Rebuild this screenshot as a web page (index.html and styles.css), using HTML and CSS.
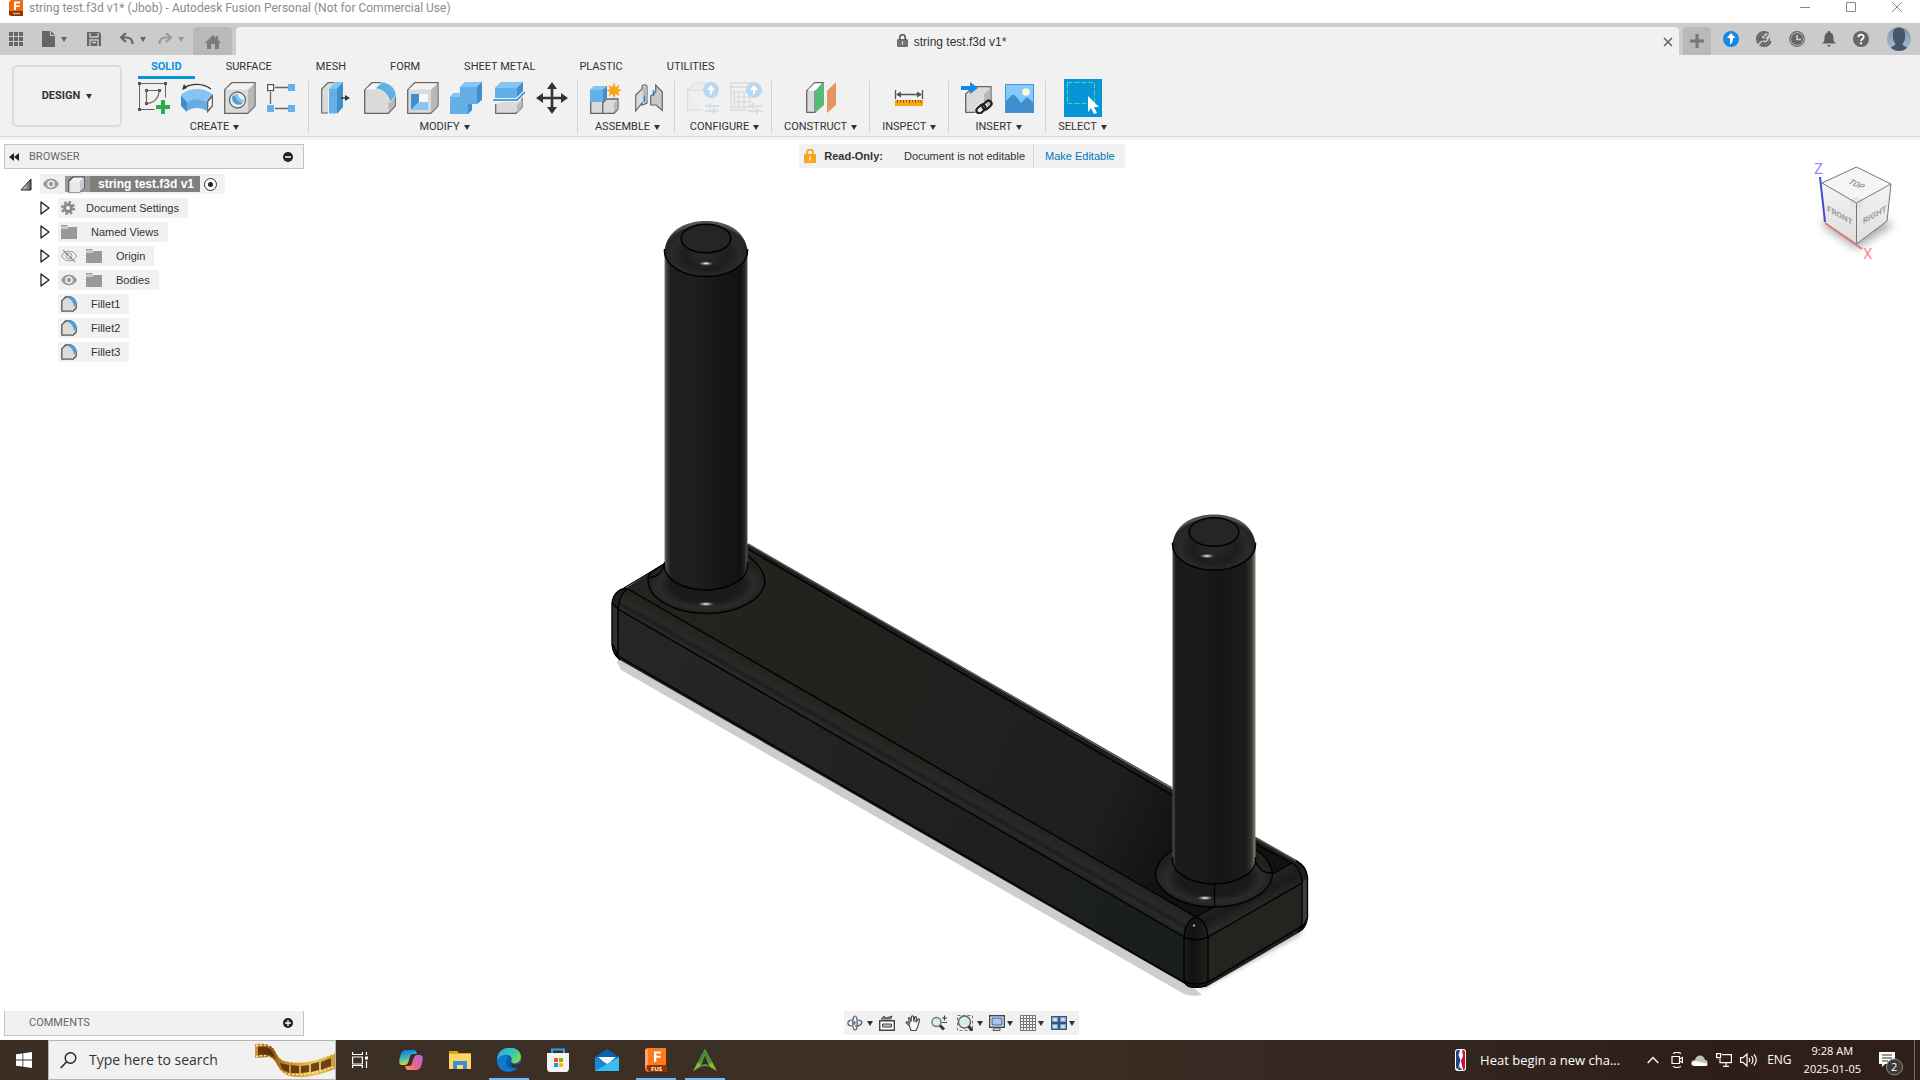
FILE: index.html
```html
<!DOCTYPE html>
<html lang="en">
<head>
<meta charset="utf-8">
<title>string test.f3d v1* (Jbob) - Autodesk Fusion Personal</title>
<link rel="stylesheet" href="styles.css">
</head>
<body>
<svg class="defs" width="0" height="0" aria-hidden="true">
  <symbol id="i-folder" viewBox="0 0 16 14"><path fill="#c9c9c9" d="M0 0h7v2h9v2H0z"/><path fill="#999" d="M0 4h7l1-2h8v12H0z"/><path fill="#999" d="M0 0h6v1H0z"/></symbol>
  <symbol id="i-eye" viewBox="0 0 16 12"><path fill="#999" d="M0 6C3-1 13-1 16 6 13 13 3 13 0 6z"/><circle cx="8" cy="6" r="3.8" fill="#f1f1f1"/><circle cx="8" cy="6" r="2.2" fill="#999"/></symbol>
  <symbol id="i-arrow" viewBox="0 0 10 14"><path d="M1 1L9 7 1 13z" fill="#f4f4f4" stroke="#222" stroke-width="1.3" stroke-linejoin="round"/></symbol>
  <symbol id="i-fillet-s" viewBox="0 0 16 16"><path d="M.8 15.2V5L4.500 1h5.500c3 1 5 4 5.200 7.500v3.500l-3 3.200z" fill="#dcdcdc" stroke="#555" stroke-width="1.300"/><path d="M7 2l2.500-1.500c3.500.5 6 4 6 8L12.800 10.500C12.500 6.500 10.500 3.500 7 2z" fill="#4ba3e3"/></symbol>
  <symbol id="i-cfg" viewBox="0 0 16 16"><circle cx="8" cy="8" r="8" fill="#b9d8ef"/><path d="M8 3l4 5h-2.500c0 2-.5 4-2.500 5V8H4z" fill="#fff"/></symbol>
  <symbol id="i-sliders" viewBox="0 0 14 11"><path d="M0 3h14M0 8h14M5 0v6M9 5v6" stroke="#d9dde0" stroke-width="2" fill="none"/></symbol>
</svg>

<header class="titlebar">
  <svg class="app-logo" width="14" height="16" viewBox="0 0 14 16"><path d="M2 0h12v15H2L0 14V2z" fill="#f26a10"/><path d="M0 11h14v5H2l-2-1z" fill="#8f3600"/><path d="M5 1.500h6v2H7v1.800h3.500v1.800H7V10H5z" fill="#fff"/><path d="M4 13.500h7" stroke="#d8b9a4" stroke-width="1.300"/></svg>
  <h1>string test.f3d v1* (Jbob) - Autodesk Fusion Personal (Not for Commercial Use)</h1>
  <div class="win-controls">
    <button aria-label="Minimize"><svg width="12" height="12"><path d="M1 7.500h10" stroke="#888"/></svg></button>
    <button aria-label="Maximize"><svg width="12" height="12"><path d="M1.500 2.500h9v9h-9z" fill="none" stroke="#888"/></svg></button>
    <button aria-label="Close"><svg width="12" height="12"><path d="M1 2l10 10M11 2L1 12" stroke="#888"/></svg></button>
  </div>
</header>

<div class="tabbar">
  <div class="quick">
    <button aria-label="Data panel"><svg width="14" height="14" fill="#666"><path d="M0 0h4v4H0zM5 0h4v4H5zM10 0h4v4h-4zM0 5h4v4H0zM5 5h4v4H5zM10 5h4v4h-4zM0 10h4v4H0zM5 10h4v4H5zM10 10h4v4h-4z"/></svg></button>
    <button class="q-file" aria-label="File"><svg width="13" height="16" fill="#666"><path d="M0 0h8v5h5v11H0zM9 0l4 4H9z"/></svg><span class="caret"></span></button>
    <button class="q-save" aria-label="Save"><svg width="14" height="14"><path d="M0 0h12l2 2v12H0z" fill="#666"/><path d="M3 1v4h8V1M3 14V8h8v6M5 10.500h4" stroke="#cbcbcb" stroke-width="1.300" fill="none"/></svg></button>
    <button class="q-undo" aria-label="Undo"><svg width="14" height="12"><path d="M6 0L1 4.500 6 9M1 4.500h5c4 0 6.500 2 6.500 6.500" stroke="#666" stroke-width="2.200" fill="none"/></svg><span class="caret"></span></button>
    <button class="q-redo" aria-label="Redo"><svg width="14" height="12"><path d="M8 0l5 4.500L8 9M13 4.500H8C4 4.500 1.500 6.500 1.500 11" stroke="#999" stroke-width="2.200" fill="none"/></svg><span class="caret"></span></button>
  </div>
  <button class="home-tab" aria-label="Home"><svg width="16" height="14"><path d="M8 0l3 3V1h2v4l3 3h-2v6h-4V9H6v5H2V8H0z" fill="#7b7b7b"/></svg></button>
  <div class="doc-tab">
    <span class="doc-name"><svg width="11" height="13"><path d="M2.800 6V3.500a2.700 2.700 0 0 1 5.400 0V6" fill="none" stroke="#555" stroke-width="1.500"/><path d="M.7 5.700h9.600v6.600H.7z" fill="#777" stroke="#555"/><path d="M5.500 7.500v3" stroke="#eee"/></svg>string test.f3d v1*</span>
    <button aria-label="Close tab"><svg width="10" height="10"><path d="M1 1l8 8M9 1L1 9" stroke="#666" stroke-width="1.600"/></svg></button>
  </div>
  <button class="new-tab" aria-label="New tab"><svg width="14" height="14"><path d="M7 0v14M0 7h14" stroke="#777" stroke-width="3"/></svg></button>
  <div class="status">
    <button aria-label="Update"><svg width="16" height="16"><circle cx="8" cy="8" r="8" fill="#1688e0"/><path d="M8 2l4.500 5H10c0 3-.5 5-3 6.500V7H4z" fill="#fff"/></svg></button>
    <button aria-label="Extensions"><svg width="16" height="16"><circle cx="8" cy="8" r="7" fill="none" stroke="#666" stroke-width="2" stroke-dasharray="36 8" stroke-dashoffset="-2"/><circle cx="8" cy="8" r="6" fill="#666"/><path d="M2 14l4-4M6 5l2.500 2.500M7 9.500C9 12 12 10 12 7l2-1M8 5l3-2.500M10 7.500L13.500 4" stroke="#cbcbcb" stroke-width="1.700" fill="none"/></svg></button>
    <button aria-label="Job status"><svg width="16" height="16"><circle cx="8" cy="8" r="7.300" fill="none" stroke="#666" stroke-width="1.200"/><circle cx="8" cy="8" r="6" fill="#666"/><path d="M8 4v4.500h4" stroke="#d5d5d5" stroke-width="1.500" fill="none"/></svg></button>
    <button aria-label="Notifications"><svg width="14" height="16"><path d="M7 0c1 0 1.300.6 1.300 1.500C11 2.300 11.500 5 11.500 7.500s.8 3.500 2.500 5H0C1.700 11 2.500 10 2.500 7.500S3 2.300 5.700 1.500C5.700.6 6 0 7 0zM5 14h4l-2 2z" fill="#5e5e5e"/></svg></button>
    <button aria-label="Help"><svg width="16" height="16"><circle cx="8" cy="8" r="8" fill="#666"/><path d="M5.300 6.300c0-3.500 5.400-3.500 5.400-.3 0 2-2.700 2-2.700 4" stroke="#fff" stroke-width="1.700" fill="none"/><path d="M7 11.300h2v2H7z" fill="#fff"/></svg></button>
    <button class="avatar" aria-label="Account"><svg width="24" height="24"><defs><clipPath id="av"><circle cx="12" cy="12" r="12"/></clipPath><linearGradient id="avg" x2="0" y2="1"><stop stop-color="#8097b4"/><stop offset="1" stop-color="#a9b9d2"/></linearGradient></defs><g clip-path="url(#av)"><path fill="url(#avg)" d="M0 0h24v24H0z"/><path d="M6 6c0-7 12-7 12 0v5c0 3-2 4-2.500 6 1 2.500 4 2 5.500 5v2H3v-2c1.500-3 4.500-2.500 5.500-5C8 15 6 14 6 11z" fill="#48566a"/></g></svg></button>
  </div>
</div>

<section class="ribbon">
  <button class="workspace">DESIGN <span class="caret"></span></button>
  <div class="ribbon-main">
    <nav class="tabs">
      <a href="#" class="active">SOLID</a><a href="#">SURFACE</a><a href="#">MESH</a><a href="#">FORM</a><a href="#">SHEET METAL</a><a href="#">PLASTIC</a><a href="#">UTILITIES</a>
    </nav>
    <div class="groups">
      <div class="group first">
        <div class="tools">
          <button aria-label="Create sketch"><svg width="32" height="32"><path d="M1.500 1.500h26v14M1.500 1.500v26h15" stroke="#666" fill="none"/><path d="M0 0h3v3H0zM26 0h3v3h-3zM0 26h3v3H0zM7 7h3v3H7zM20 7h3v3h-3zM7 20h3v3H7z" fill="#555"/><path d="M8.500 21V8.500H21C21 16 16 21 9 21.500" stroke="#666" fill="none" stroke-width="1.200"/><path d="M23 18h4v5h5v4h-5v5h-4v-5h-5v-4h5z" fill="#28b04c"/></svg></button>
          <button aria-label="Revolve"><svg width="32" height="32"><path d="M3 6c7-5 19-5 27 1" stroke="#333" stroke-width="1.300" fill="none"/><path d="M1 8l2-6 3 4z" fill="#333"/><path d="M0 13C8 5 24 5 32 13l-6 7c-6-4-14-4-20 0z" fill="#85c5f3"/><path d="M0 13l6 7v10l-6-6z" fill="#3f8fce"/><path d="M6 20c6-4 14-4 20 0v9c-6-4-14-4-20 0z" fill="#64aee4"/><path d="M26.700 19.500L31.300 14v10l-4.600 5.500z" fill="#fff" stroke="#555" stroke-width="1.200"/></svg></button>
          <button aria-label="Hole"><svg width="32" height="32"><path d="M.7 8l7-7.300H31V24l-7.300 7.300H.7z" fill="#dadada" stroke="#666" stroke-width="1.300"/><path d="M1.500 7.500l6.500-6h22L24 7.500z" fill="#f2f2f2"/><path d="M24 8l6.400-6v22L24 30.500z" fill="#b8b8b8"/><circle cx="13.500" cy="18" r="8" fill="#eee" stroke="#666" stroke-width="1.300"/><path d="M8.500 13.500c-2 6 3 11 9.500 8.500 1-3-5-10-9.500-8.500z" fill="#4ba0dc"/><path d="M11 12c0 5 3 8.500 8 8.500l1-3c-4 0-6-2-6-5.500z" fill="#85c5f3"/></svg></button>
          <button aria-label="Pattern"><svg width="32" height="32"><path d="M8 5.500h13M3.500 10v12M8 26.500h13" stroke="#666" stroke-width="1.300"/><path d="M.6 2.600h6v6h-6z" fill="#fff" stroke="#555" stroke-width="1.200"/><path d="M21 2h7v7h-7zM0 23h7v7H0zM21 23h7v7h-7z" fill="#67b0e8"/></svg></button>
        </div>
        <button class="caption">CREATE <span class="caret"></span></button>
      </div>
      <div class="group">
        <div class="tools">
          <button aria-label="Press pull"><svg width="32" height="32"><path d="M.7 7L7 .7h9L9 7v24H.7z" fill="#dadada" stroke="#666" stroke-width="1.200"/><path d="M7.500 7.500L14 0h8v24l-7 8H7.500z" fill="#65afe7" stroke="#f1f1f1"/><path d="M8 7l6-7h8l-6 7z" fill="#85c5f3"/><path d="M16 7l6-7v25l-6 7z" fill="#3f8fce"/><path d="M20 16h6" stroke="#333" stroke-width="1.400"/><path d="M24 13l5 3-5 3z" fill="#333"/></svg></button>
          <button aria-label="Fillet"><svg width="32" height="32"><path d="M.7 31.300V8L8 .7h10c8 2 13 7 13.300 14V24l-7 7.300z" fill="#dadada" stroke="#666" stroke-width="1.300"/><path d="M1.500 7.500l7-6h8L11 7.500z" fill="#f8f8f8"/><path d="M24.500 21l6-5v8l-6 6.500z" fill="#b8b8b8"/><path d="M11 6.500L18 0c8 1 14 6 14 14l-6.500 6.500C25 13 19 7.500 11 6.500z" fill="#65afe7" stroke="#f1f1f1" stroke-width=".8"/></svg></button>
          <button aria-label="Shell"><svg width="32" height="32"><path d="M.7 8l7-7.300H31V24l-7.300 7.300H.7z" fill="#dadada" stroke="#666" stroke-width="1.300"/><path d="M1.500 7.500l6.500-6h22L24 7.500z" fill="#f2f2f2"/><path d="M24 8l6.400-6v22L24 30.500z" fill="#b8b8b8"/><path d="M4 12h17v16H4z" fill="#f7f7f7"/><path d="M4 12h8v8l-8 8z" fill="#3f8fce"/><path d="M4 28l8-8h9v8z" fill="#85c5f3"/></svg></button>
          <button aria-label="Combine"><svg width="32" height="32"><path d="M10 5l5-5h17v18l-5 4h-5v6l-4 4H0V15l4-4h6z" fill="#65afe7"/><path d="M10 5l5-5h17l-5 5zM0 15l4-4h6v4z" fill="#85c5f3"/><path d="M27 5l5-5v17l-5 5zM18 22h4v6l-4 4z" fill="#3f8fce"/></svg></button>
          <button aria-label="Split body"><svg width="32" height="32"><path d="M2.700 22v9.300H23l6-6V15" fill="#dadada" stroke="#666" stroke-width="1.300"/><path d="M24 23l5-5v7l-5 6z" fill="#b8b8b8"/><path d="M2 6l6-6h22v10l-6 6H2z" fill="#65afe7"/><path d="M2 6l6-6h22l-6 6z" fill="#85c5f3"/><path d="M24 6l6-6v10l-6 6z" fill="#3f8fce"/><path d="M0 18h24l8-8" stroke="#f1f1f1" stroke-width="4" fill="none"/><path d="M0 18h24l8-8" stroke="#1688e0" stroke-width="1.500" fill="none"/></svg></button>
          <button aria-label="Move"><svg width="32" height="32"><path d="M16 4v24M4 16h24" stroke="#333" stroke-width="2.600"/><path d="M16 0l5 7H11zM16 32l-5-7h10zM0 16l7-5v10zM32 16l-7 5V11z" fill="#333"/></svg></button>
        </div>
        <button class="caption">MODIFY <span class="caret"></span></button>
      </div>
      <div class="group">
        <div class="tools">
          <button aria-label="New component"><svg width="32" height="32"><path d="M.7 19h12v12.300H.7zM12.700 21l4-4H28v10l-4 4.300H12.700z" fill="#dadada" stroke="#666" stroke-width="1.300"/><path d="M24 21l3.500-3v9L24 30.500z" fill="#b8b8b8"/><path d="M0 8l4-4h13v12l-4 4H0z" fill="#65afe7"/><path d="M0 8l4-4h13l-4 4z" fill="#85c5f3"/><path d="M13 8l4-4v12l-4 4z" fill="#3f8fce"/><path d="M24 0l1.500 5 4-2.500-1.500 4.500 4 1-4 2 1.500 4-4-2L24 17l-1.500-5-4 2.500 1.500-4.500-4-1.500 4-1.500-1.500-4 4 2z" fill="#f9a51a"/></svg></button>
          <button aria-label="Joint"><svg width="32" height="32"><path d="M2.700 13L9 7V5c0-3 5-3 5 0v16l-5 2v-2l-6.300 8z" fill="#dadada" stroke="#666" stroke-width="1.200"/><path d="M10 5v15l4-1V5z" fill="#b8b8b8"/><path d="M17.700 14l5-4V3l6.600 7v18.500L23 23h-5.300z" fill="#c8c8c8" stroke="#666" stroke-width="1.200"/><path d="M11.500 14v6M20.500 8v6" stroke="#1688e0" stroke-width="1.400"/></svg></button>
        </div>
        <button class="caption">ASSEMBLE <span class="caret"></span></button>
      </div>
      <div class="group">
        <div class="tools">
          <button aria-label="Configure model" disabled><svg width="32" height="32"><path d="M.7 8l7-7H27v16M.7 8v20H16M1 8h18" fill="#eee" stroke="#dcdcdc" stroke-width="1.200"/><use href="#i-cfg" x="16" y="0" width="16" height="16"/><use href="#i-sliders" x="18" y="21" width="14" height="11"/></svg></button>
          <button aria-label="Configuration table" disabled><svg width="32" height="32"><path d="M1 1h22v4H1zM1 5v23h15M4 10h16v15H4zM4 15h16M4 20h16M9 10v15M14 10v15" fill="none" stroke="#dcdcdc" stroke-width="1.500"/><use href="#i-cfg" x="16" y="0" width="16" height="16"/><use href="#i-sliders" x="18" y="21" width="14" height="11"/></svg></button>
        </div>
        <button class="caption">CONFIGURE <span class="caret"></span></button>
      </div>
      <div class="group wide">
        <div class="tools">
          <button aria-label="Offset plane"><svg width="32" height="32"><path d="M1.700 9l8-8.300H18L10 9v21.300H1.700z" fill="#dadada" stroke="#666" stroke-width="1.300"/><path d="M2.500 8.500l7-7H17l-6 7z" fill="#fff"/><path d="M10 9l9-9v23l-9 8z" fill="#52bd76"/><path d="M22 9l9-9v23l-9 8z" fill="#e5955f"/></svg></button>
        </div>
        <button class="caption">CONSTRUCT <span class="caret"></span></button>
      </div>
      <div class="group wide">
        <div class="tools">
          <button aria-label="Measure"><svg width="32" height="32"><path d="M2.500 8v9M29.500 8v9M4 12.500h24" stroke="#555" stroke-width="1.300"/><path d="M3 12.500l5-3v6zM29 12.500l-5-3v6z" fill="#555"/><path d="M2 18h28v6H2z" fill="#f9a51a"/><path d="M4.500 18v3M7.500 18v2M10.500 18v3M13.500 18v2M16.500 18v3M19.500 18v2M22.500 18v3M25.500 18v2M28 18v3" stroke="#8b5c08"/></svg></button>
        </div>
        <button class="caption">INSPECT <span class="caret"></span></button>
      </div>
      <div class="group">
        <div class="tools">
          <button aria-label="Insert derive"><svg width="32" height="32"><path d="M4.700 12L13 4.700h17V23l-7 7.300H4.700z" fill="#dadada" stroke="#666" stroke-width="1.300"/><path d="M23 12l6.500-6v17L23 29z" fill="#b8b8b8"/><path d="M0 4h9V0l8 6-8 6V8H0z" fill="#1688e0"/><g fill="none" stroke="#f1f1f1" stroke-width="5"><rect x="16" y="24" width="9" height="6" rx="3" transform="rotate(-40 20 27)"/></g><g fill="none" stroke="#222" stroke-width="2.200"><rect x="15" y="24" width="10" height="6" rx="3" transform="rotate(-40 20 27)"/><rect x="21" y="20" width="10" height="6" rx="3" transform="rotate(-40 26 23)"/></g></svg></button>
          <button aria-label="Insert image"><svg width="32" height="32"><path d="M1 2h29v29H1z" fill="#85c9fb"/><path d="M1 20l7-7c2-1 4 1 6 4l3 4 5-5c2-1 4 1 8 6v9H1z" fill="#3f8fce"/><circle cx="22" cy="10" r="3.800" fill="#fffbd6"/><path d="M1.500 2.500h28v28h-28z" fill="none" stroke="#4695cf"/></svg></button>
        </div>
        <button class="caption">INSERT <span class="caret"></span></button>
      </div>
      <div class="group last">
        <div class="tools">
          <button class="selected" aria-label="Select"><svg width="38" height="38"><path d="M3.500 3.500h27v21h-27z" fill="none" stroke="#54d88c" stroke-dasharray="5 2"/><path d="M24 17l11 11h-5l3 6-3 1-3-6-3 4z" fill="#fff"/></svg></button>
        </div>
        <button class="caption">SELECT <span class="caret"></span></button>
      </div>
    </div>
  </div>
</section>

<main class="viewport">
  <svg class="model" viewBox="0 140 1920 900" role="img" aria-label="Base plate with two posts">
    <defs>
      <linearGradient id="post1"><stop stop-color="#7b776e"/><stop offset=".03" stop-color="#3c3c3a"/><stop offset=".08" stop-color="#1d1d1d"/><stop offset=".35" stop-color="#1f1f1f"/><stop offset=".7" stop-color="#161616"/><stop offset=".92" stop-color="#121212"/><stop offset=".97" stop-color="#282826"/><stop offset="1" stop-color="#5b5852"/></linearGradient>
      <linearGradient id="post2"><stop stop-color="#55524d"/><stop offset=".04" stop-color="#191b1b"/><stop offset=".3" stop-color="#1a1c1c"/><stop offset=".6" stop-color="#151515"/><stop offset=".88" stop-color="#1b1b1a"/><stop offset=".95" stop-color="#35342f"/><stop offset="1" stop-color="#8a867c"/></linearGradient>
      <linearGradient id="topf" gradientUnits="userSpaceOnUse" x1="640" y1="590" x2="1180" y2="840"><stop stop-color="#232320"/><stop offset=".85" stop-color="#1f1f1d"/><stop offset="1" stop-color="#121211"/></linearGradient>
      <linearGradient id="frontf" gradientUnits="userSpaceOnUse" x1="612" y1="620" x2="1184" y2="960"><stop stop-color="#262626"/><stop offset="1" stop-color="#1a1d1d"/></linearGradient>
      <linearGradient id="round" gradientUnits="userSpaceOnUse" x1="900" y1="747" x2="888" y2="768"><stop stop-color="#232320"/><stop offset=".45" stop-color="#292927"/><stop offset=".6" stop-color="#1d1d1d"/><stop offset=".75" stop-color="#2a2a2a"/><stop offset="1" stop-color="#1e1f1f"/></linearGradient>
      <linearGradient id="round2" gradientUnits="userSpaceOnUse" x1="1244" y1="890" x2="1254" y2="910"><stop stop-color="#232320"/><stop offset=".5" stop-color="#1b1b1a"/><stop offset="1" stop-color="#292927"/></linearGradient>
      <linearGradient id="corner"><stop stop-color="#1b1c1c"/><stop offset=".4" stop-color="#111"/><stop offset="1" stop-color="#20201f"/></linearGradient>
      <radialGradient id="cap" cx=".5" cy=".6" r=".55"><stop stop-color="#2a2a29"/><stop offset=".5" stop-color="#1d1d1d"/><stop offset=".75" stop-color="#292a29"/><stop offset=".93" stop-color="#252524"/><stop offset="1" stop-color="#55534e"/></radialGradient>
      <radialGradient id="flare"><stop offset=".6" stop-color="#1a1a1a"/><stop offset=".82" stop-color="#2b2b2a"/><stop offset="1" stop-color="#20201e"/></radialGradient>
      <radialGradient id="spark"><stop stop-color="#fff"/><stop offset=".3" stop-color="#aaa"/><stop offset="1" stop-color="#444" stop-opacity="0"/></radialGradient>
      <filter id="soft" x="-10%" y="-10%" width="120%" height="120%"><feGaussianBlur stdDeviation="2"/></filter>
    </defs>
    <path d="M617 662L621 670 1184 994q8 3 18 1L1190 984 622 654z" fill="#cdcdcd"/>
    <path d="M1200 990L1300 935l3-5-100 52z" fill="#aaa" filter="url(#soft)"/>
    <path d="M612 603q2-13 14-15L664 564 748 544 1172 789 1298 861q9 5 10 17v40q-1 10-8 14L1206 987h-16L620 660q-7-6-8-15z" fill="#1f1f1d"/>
    <path d="M628 588L664 565 748 548 1292 863 1196 917z" fill="url(#topf)"/>
    <path d="M628 588L1196 917l-12 20L618 609q1-12 10-21z" fill="url(#round)"/>
    <path d="M612 603l6 6v49q-6-4-6-13z" fill="#30302e"/>
    <path d="M618 609L1184 937v45L618 656z" fill="url(#frontf)"/>
    <path d="M1196 917l96-54q9 6 10 20l-94 54z" fill="url(#round2)"/>
    <path d="M1208 937l94-54v42l-94 57z" fill="#232320"/>
    <path d="M1302 883l6-6v41l-6 8z" fill="#3d3c39"/>
    <path d="M1184 937q2-16 12-20 10 4 12 20v45q-2 6-12 6t-12-6z" fill="url(#corner)"/>
    <path d="M748 544L1172 788M1256 838l42 24" stroke="#55544f" stroke-width="1.500" fill="none"/>
    <g fill="none" stroke="#000" stroke-width="1.400">
      <path d="M628 589L1196 917l96-54M612 603l6 6L1184 937q12 6 24 0l94-54M613 645l5 11L1184 982q12 4 24 0l94-56M1184 982v-45q1-16 12-20 11 4 12 20v45M618 658v-49q1-14 10-21M612 603v42q1 9 8 15M624 588l40-24M748 549L1172 795M1256 844l36 19M1292 863q9 5 10 20v43l-4 6M1296 861q10 5 11.500 16v41l-6 12M612 603q2-13 14-15M1184 980q2 7 8 7h8q6 0 8-7"/>
    </g>
    <path d="M664 564L650 573q-2 3-2 7a58.500 33.500 0 0 0 117 0q-2-13-17-24z" fill="url(#flare)" stroke="#000" stroke-width="1.400"/>
    <path d="M664 565q-2 11-15 13" fill="none" stroke="#000" stroke-width="1.300"/>
    <path d="M1155.500 873a58.500 34 0 0 0 117 0q-2-13-16-23h-84q-15 10-17 23z" fill="url(#flare)" stroke="#000" stroke-width="1.400"/>
    <path d="M1256 862q4 11 16 11M1214.500 883v24" fill="none" stroke="#000" stroke-width="1.300"/>
    <path d="M664.500 250v316a41.500 24 0 0 0 83 0V250z" fill="url(#post1)"/>
    <path d="M1172.500 545v315a41.500 24 0 0 0 83 0V545z" fill="url(#post2)"/>
    <path d="M664.500 562v4a41.500 24 0 0 0 83 0v-4M1172.500 857v3a41.500 24 0 0 0 83 0v-3" fill="none" stroke="#000" stroke-width="1.400"/>
    <g id="post-cap">
      <path d="M664.500 251c2-20 20-30 41.500-30s39.500 10 41.500 30a41.500 25.500 0 0 1-83 0z" fill="url(#cap)"/>
      <path d="M664.500 249v2a41.500 25.500 0 0 0 83 0v-2" fill="none" stroke="#000" stroke-width="1.500"/>
      <ellipse cx="706" cy="238.500" rx="24.800" ry="14.300" fill="#252523" stroke="#000" stroke-width="1.500"/>
    </g>
    <use href="#post-cap" x="508" y="293.500"/>
    <g fill="url(#spark)"><ellipse cx="706" cy="263.500" rx="8" ry="2.500"/><ellipse cx="1207" cy="556" rx="8" ry="2.500"/><ellipse cx="706" cy="604" rx="9" ry="2.500"/><ellipse cx="1205" cy="898" rx="9" ry="2.500"/><circle cx="1194" cy="925.500" r="2"/></g>
  </svg>

  <aside class="browser">
    <div class="panel-head"><svg width="11" height="8"><path d="M5 0v8L0 4zM10 0v8L5 4z" fill="#222"/></svg><h2>BROWSER</h2><button aria-label="Collapse browser"><svg width="10" height="10"><circle cx="5" cy="5" r="5" fill="#222"/><path d="M2 5h6" stroke="#fff" stroke-width="1.500"/></svg></button></div>
    <ul class="tree">
      <li class="root"><svg class="twist" width="12" height="13"><defs><linearGradient id="tw"><stop stop-color="#eee"/><stop offset="1" stop-color="#555"/></linearGradient></defs><path d="M1 12L11 1v11z" fill="url(#tw)" stroke="#222"/></svg><div class="node"><svg width="16" height="12"><use href="#i-eye"/></svg><span class="comp"><svg width="17" height="17"><path d="M1 5l4-4h11v11l-4 4H1z" fill="#f4f4f4" stroke="#444" stroke-width="1.200"/><path d="M12 5l4-3.500V12l-4 4z" fill="#c4ccd8"/><path d="M1.500 5.500H12V16H1.500z" fill="#e6e8ec"/></svg></span><span class="root-name">string test.f3d v1</span><label class="act"><input type="radio" name="active" checked aria-label="Activate component"></label></div></li>
      <li><svg class="twist" width="10" height="14"><use href="#i-arrow"/></svg><div class="node gear"><svg width="14" height="14"><circle cx="7" cy="7" r="3.500" fill="none" stroke="#888" stroke-width="3"/><circle cx="7" cy="7" r="5.900" fill="none" stroke="#888" stroke-width="2.200" stroke-dasharray="2.600 2"/></svg>Document Settings</div></li>
      <li><svg class="twist" width="10" height="14"><use href="#i-arrow"/></svg><div class="node"><svg width="16" height="14"><use href="#i-folder"/></svg>Named Views</div></li>
      <li><svg class="twist" width="10" height="14"><use href="#i-arrow"/></svg><div class="node pair"><svg width="16" height="12"><path d="M.5 6c3-6.500 12-6.500 15 0-3 6.500-12 6.500-15 0z" fill="none" stroke="#999"/><circle cx="8" cy="6" r="3" fill="none" stroke="#999"/><path d="M2 0l12 12" stroke="#888" stroke-width="1.200"/></svg><svg width="16" height="14"><use href="#i-folder"/></svg>Origin</div></li>
      <li><svg class="twist" width="10" height="14"><use href="#i-arrow"/></svg><div class="node pair"><svg width="16" height="12"><use href="#i-eye"/></svg><svg width="16" height="14"><use href="#i-folder"/></svg>Bodies</div></li>
      <li class="leaf"><div class="node"><svg width="16" height="16"><use href="#i-fillet-s"/></svg>Fillet1</div></li>
      <li class="leaf"><div class="node"><svg width="16" height="16"><use href="#i-fillet-s"/></svg>Fillet2</div></li>
      <li class="leaf"><div class="node"><svg width="16" height="16"><use href="#i-fillet-s"/></svg>Fillet3</div></li>
    </ul>
  </aside>

  <div class="readonly">
    <svg width="12" height="14"><path d="M3 6V3.500a3 3 0 0 1 6 0V6" fill="none" stroke="#f9a51a" stroke-width="1.800"/><path d="M0 5h12v9H0z" fill="#f9a51a"/><path d="M6 7.500v4" stroke="#fff3d0" stroke-width="1.500"/></svg>
    <strong>Read-Only:</strong><span class="msg">Document is not editable</span><a href="#">Make Editable</a>
  </div>

  <svg class="viewcube" width="110" height="112" viewBox="1810 155 110 112">
    <defs><linearGradient id="cf" x2="0" y2="1"><stop stop-color="#f4f4f4"/><stop offset="1" stop-color="#dedede"/></linearGradient><filter id="cs" x="-30%" y="-60%" width="160%" height="220%"><feGaussianBlur stdDeviation="4"/></filter></defs>
    <path d="M1820 224l36 25 38-24-36-16z" fill="#777" opacity=".6" filter="url(#cs)"/>
    <path d="M1822 183l34.500 20v41L1825 223zM1891 184l-34.500 19v41L1887 221z" fill="url(#cf)"/>
    <path d="M1822 183l34.500-16 34.500 17-34.500 19z" fill="#f5f5f5"/>
    <path d="M1850 199.500l6.500-3 6.500 3v7l-6.500 3.500-6.500-3.500z" fill="#dde1e6" opacity=".7"/>
    <path d="M1822 183l34.500-16 34.500 17-34.500 19zM1856.500 203v41M1891 184l-4 37-30.500 23L1825 223" fill="none" stroke="#777"/>
    <path d="M1820 177l5 45" stroke="#4646d8" stroke-width="2"/>
    <path d="M1825 223l37 26" stroke="#e07a7a" stroke-width="2"/>
    <g class="face"><text transform="translate(1827 211) skewY(29)">FRONT</text><text transform="translate(1863 224) skewY(-29)">RIGHT</text><text transform="translate(1847 183) rotate(24) skewX(-28)">TOP</text></g>
    <text class="axis-z" x="1814" y="174">Z</text><text class="axis-x" x="1863" y="259">X</text>
  </svg>

  <aside class="panel-head comments"><h2>COMMENTS</h2><button aria-label="Expand comments"><svg width="10" height="10"><circle cx="5" cy="5" r="5" fill="#222"/><path d="M2 5h6M5 2v6" stroke="#fff" stroke-width="1.300"/></svg></button></aside>

  <div class="navbar">
    <button aria-label="Orbit"><svg width="16" height="16"><path d="M8 1c3 0 3 14 0 14S5 1 8 1zM5 5C-.5 5-.5 11 5 11M11 5c5.500 0 5.500 6-3 6" fill="none" stroke="#555" stroke-width="1.200"/><path d="M7.500 6v4M5.500 8h4" stroke="#2a7fd0" stroke-width="1.200" fill="none"/></svg><span class="caret"></span></button>
    <button aria-label="Look at"><svg width="16" height="16"><path d="M.7 5.700h14.600v9.600H.7z" fill="#fff" stroke="#444" stroke-width="1.400"/><path d="M3.500 9h9v3h-9z" fill="#bbb" stroke="#444"/><path d="M2 4l3-3 2 2 6-2-1 3z" fill="#888" stroke="#555"/></svg></button>
    <button aria-label="Pan"><svg width="16" height="16"><path d="M4.500 11L1 7.500c1-1.500 2.500 0 3.500 1L3.500 3c1-1.500 1.500 0 2.500 4L6.500 1.500c1-1.500 2 0 2 0L8.800 7l1-5c1-1 1.800 0 1.500 1L11 7.500l2-3.500c1-.5 1.800 0 1.500 1L13 11l-2 4.500H6z" fill="#fff" stroke="#444" stroke-width="1.100"/></svg></button>
    <button aria-label="Zoom"><svg width="16" height="16"><circle cx="5.500" cy="7" r="4.500" fill="#d9edf2" stroke="#777" stroke-width="1.400"/><path d="M9 10.500l4 4" stroke="#333" stroke-width="2.800"/><path d="M11 3h5M13.500.5v5M11 7.500h5" stroke="#444" stroke-width="1.200"/></svg></button>
    <button class="fit" aria-label="Fit"><svg width="16" height="16"><path d="M.5.500h15v15H.5z" fill="none" stroke="#777" stroke-dasharray="3 2"/><circle cx="7.500" cy="7" r="6" fill="#d9ede8" stroke="#666" stroke-width="1.400"/><path d="M11.500 11.500l4 4" stroke="#333" stroke-width="3"/></svg><span class="caret"></span></button>
    <button class="tight" aria-label="Display settings"><svg width="16" height="16"><path d="M.7.700h14.600v11.600H.7z" fill="#fff" stroke="#445" stroke-width="1.400"/><path d="M3 3h10v7H3z" fill="#a5c8ee" stroke="#2b5fa5"/><path d="M5 13h6v2.500H4z" fill="#ddd" stroke="#555"/></svg><span class="caret"></span></button>
    <button class="tight" aria-label="Grid and snaps"><svg width="16" height="16"><path d="M.5.500h15v15H.5zM3.500 0v16M6.500 0v16M9.500 0v16M12.500 0v16M0 3.500h16M0 6.500h16M0 9.500h16M0 12.500h16" fill="none" stroke="#777"/></svg><span class="caret"></span></button>
    <button class="tight" aria-label="Viewports"><svg width="16" height="14"><g fill="#9dc0e6" stroke="#345579" stroke-width="1.200"><path d="M.6.600h6.800v5.800H.6zM8.600.600h6.800v5.800H8.600zM.6 7.600h6.800v5.800H.6zM8.600 7.600h6.800v5.800H8.600z"/></g><path d="M2.500 3.500h3M10.500 3.500h3M2.500 10.500h3M10.500 10.500h3" stroke="#dcebfa" stroke-width="2"/></svg><span class="caret"></span></button>
  </div>
</main>

<footer class="taskbar">
  <button class="start" aria-label="Start"><svg width="16" height="16" fill="#fff"><path d="M0 2.300l6.500-.9v6.200H0zM7.300 1.300L16 0v7.600H7.300zM0 8.400h6.500v6.200L0 13.700zM7.300 8.400H16V16l-8.700-1.300z"/></svg></button>
  <label class="search"><svg class="glass" width="17" height="17"><circle cx="10.500" cy="6" r="5.300" fill="none" stroke="#222" stroke-width="1.400"/><path d="M6.700 9.800L.7 16" stroke="#222" stroke-width="1.500"/></svg><input type="text" placeholder="Type here to search" aria-label="Search">
    <svg class="film" width="80" height="38"><defs><linearGradient id="fg"><stop stop-color="#d59a33"/><stop offset=".2" stop-color="#8d5714"/><stop offset=".4" stop-color="#c98b27"/><stop offset=".75" stop-color="#efc864"/><stop offset="1" stop-color="#d39a31"/></linearGradient></defs><path d="M0 3c9-1 16 0 19 5s5 11 11 12c18 4 32 0 50-8v16c-18 7-34 11-48 6-10-4-10-17-18-18-5 0-9 1-14 1z" fill="url(#fg)"/><path d="M3 6c7-1 11 0 14 4l4 8c-4-5-10-5-18-4zM25 22l9 2v8l-7-4zM36 24l8 1v7l-8 0zM46 25l8-1v7l-8 1zM56 23l8-2v8l-8 2zM66 21l10-4v8l-10 4z" fill="#4c2708" opacity=".8"/><path d="M1 4.500c17-2 18 2 22 10 5 9 28 9 57-2M1 15.500c12-2 15-1 20 9 6 14 34 10 59 1" fill="none" stroke="#fff2c4" stroke-width="1.300" stroke-dasharray="2 2"/></svg>
  </label>
  <div class="apps">
    <button class="taskview" aria-label="Task view"><svg width="16" height="16" fill="none" stroke="#fff" stroke-width="1.200"><path d="M.6 0v2.500h9.800V0M.6 5h9.800v7H.6zM.6 16v-2.500h9.800V16M14.500 0v3M14.500 9v7"/><path d="M13 4.500h3v3h-3z" fill="#fff" stroke="none"/></svg></button>
    <button aria-label="Copilot"><svg width="24" height="22"><defs><linearGradient id="cp1" x2=".3" y2="1"><stop stop-color="#1b63e0"/><stop offset=".5" stop-color="#25b5c9"/><stop offset="1" stop-color="#e8d238"/></linearGradient><linearGradient id="cp2" x1="1" x2="0" y2="1"><stop stop-color="#b267f0"/><stop offset=".6" stop-color="#f0617c"/><stop offset="1" stop-color="#fba14a"/></linearGradient></defs><path d="M7 1h8c2 0 2 2 3 4h-4c-3 0-3 3-4 6s-2 5-4 5H4c-5 0-4-4-3-8S3 1 7 1z" fill="url(#cp1)"/><path d="M17 21H9c-2 0-2-2-3-4h4c3 0 3-3 4-6s2-5 4-5h2c5 0 4 4 3 8s-2 7-6 7z" fill="url(#cp2)"/></svg></button>
    <button aria-label="File Explorer"><svg width="22" height="20"><path d="M0 1h8l2 2h12v16H0z" fill="#e0a315"/><path d="M0 4h22v15H0z" fill="#ffd768"/><path d="M4 19v-8h14v8h-4v-4H8v4z" fill="#3a8fd8"/></svg></button>
    <button class="open" aria-label="Edge"><svg width="24" height="24"><defs><linearGradient id="ed1" x2="1" y2=".6"><stop stop-color="#2ca6e0"/><stop offset=".6" stop-color="#35c4b8"/><stop offset="1" stop-color="#76e04c"/></linearGradient></defs><circle cx="12" cy="12" r="12" fill="#0d5cae"/><path d="M0 12C0-4 24-4 24 9c0 6-8 8-10 5 2-3 0-7-4-7C4 7 1 10 0 12z" fill="url(#ed1)"/><path d="M0 12c2-5 10-6 11-2-4 5-1 13 8 10-5 6-19 5-19-8z" fill="#1279d1"/><path d="M14 14c3 4 8 3 10 0v4c-2 3-12 3-10-4z" fill="#3c2f26"/></svg></button>
    <button aria-label="Store"><svg width="24" height="24"><path d="M6 6V1.500h12V6" fill="none" stroke="#27a7e8" stroke-width="2"/><path d="M1 5h22v15q0 4-3 4H4q-3 0-3-4z" fill="#f3f3f3"/><path d="M8 10h4v4H8z" fill="#f25022"/><path d="M13 10h4v4h-4z" fill="#7fba00"/><path d="M8 15h4v4H8z" fill="#00a4ef"/><path d="M13 15h4v4h-4z" fill="#ffb900"/></svg></button>
    <button aria-label="Mail"><svg width="24" height="22"><path d="M0 8l12-8 12 8v3H0z" fill="#0b5fb0"/><path d="M3 8h18l-9 8z" fill="#f7f7f7"/><path d="M0 8l24 14H0z" fill="#2aa5ea"/><path d="M24 8L0 22h24z" fill="#35bdf5"/><path d="M0 8l12 7L0 22z" fill="#1c86d8"/></svg></button>
    <button class="open" aria-label="Fusion"><svg width="22" height="24"><path d="M0 2q0-2 3-2h18v24H4q-4 0-4-4z" fill="#ff7a1a"/><path d="M0 3q1-2 3-2v16l-3 2z" fill="#ffa46a"/><path d="M2 17h20v7H5q-4-1-3-7z" fill="#8f3600"/><path d="M9 3.500h7v2h-4.700v2.200h4.200v2h-4.200v4H9z" fill="#fff"/><text class="fus" x="6" y="23">FUS</text></svg></button>
    <button class="open" aria-label="Editor"><svg width="24" height="22"><path d="M12 0l12 22-7-4-5-12-5 12-7 4z" fill="#8bbf2e"/><path d="M12 0l7 13-2 2-5-9-5 9-2-2z" fill="#3f8f3a"/><path d="M6 18c4-4 8-4 12 0-4-1-8-1-12 0z" fill="#4e9a38"/></svg></button>
  </div>
  <div class="tray">
    <button class="news"><svg width="11" height="22"><rect width="11" height="22" rx="3" fill="#fff"/><path d="M1 3q0-2 2-2h2L3.500 6l2 5L3 20q-2 0-2-2z" fill="#1d428a"/><path d="M7 1q3 0 3 2v16q0 2-2 2L6 12l2-5z" fill="#c8102e"/><path d="M3 21l1-4 3 4z" fill="#1d428a"/></svg>Heat begin a new cha...</button>
    <button aria-label="Hidden icons"><svg width="12" height="8"><path d="M.7 7L6 1.500 11.300 7" fill="none" stroke="#fff" stroke-width="1.300"/></svg></button>
    <button class="camera" aria-label="Camera"><svg width="12" height="16"><path d="M1 4.500h7.500v7H1zM8.500 7l3-1.500v5l-3-1.500M2 1.500q4-2 8 0M2 14.500q4 2 8 0" fill="none" stroke="#fff" stroke-width="1.200"/></svg></button>
    <button aria-label="OneDrive"><svg width="17" height="11"><path d="M4 5c1-6 9-6 10 0 4 0 3 6 0 6H3C-1 11-1 5 4 5z" fill="#c4c0bd"/><path d="M4 11c-5-1-3-5 1-5l8 2c4 0 5 3 1 3z" fill="#fff"/></svg></button>
    <button aria-label="Network"><svg width="16" height="14" fill="none" stroke="#fff" stroke-width="1.200"><path d="M6 1.600h9.400v8H4V6M7 13.400h6M10 9.600v4M.6.600h4v4h-4z"/></svg></button>
    <button aria-label="Volume"><svg width="17" height="14" fill="none" stroke="#fff" stroke-width="1.200"><path d="M.6 4.600H3l4-3.600v12L3 9.400H.6zM9 5q1.500 2 0 4M11.500 3q3 4 0 8M14 1.500q4.500 5.500 0 11"/></svg></button>
    <button class="lang">ENG</button>
    <button class="clock"><span>9:28 AM</span><span>2025-01-05</span></button>
    <button class="notif" aria-label="Notifications"><svg width="26" height="26"><path d="M0 2h16v12H6l-3 3v-3H0z" fill="#fff"/><path d="M3 5h10M3 8h10M3 11h6" stroke="#332"/><circle cx="15.500" cy="17" r="8" fill="#3b3b3b" stroke="#8a8a8a"/><text x="12" y="21">2</text></svg></button>
  </div>
</footer>
</body>
</html>
```
FILE: styles.css
```css
* { box-sizing: border-box; }

body {
  margin: 0;
  min-height: 100vh;
  display: flex;
  flex-direction: column;
  background: #fff;
  color: #333;
  font: 11px/16px "Liberation Sans", Arial, sans-serif;
}

button {
  display: flex;
  align-items: center;
  justify-content: center;
  margin: 0;
  padding: 0;
  border: 0;
  background: none;
  color: inherit;
  font: inherit;
}

a { color: inherit; text-decoration: none; }
h1, h2, ul { margin: 0; padding: 0; font-weight: normal; }
svg { flex: none; display: block; }
.defs { position: absolute; }

.caret {
  border: 3px solid transparent;
  border-top: 5px solid currentColor;
  border-bottom: 0;
}

/* Title bar */
.titlebar {
  display: flex;
  height: 23px;
  padding: 0 17px 0 9px;
  color: #8c8c8c;
}
.app-logo { margin-right: 6px; }
.titlebar h1 { flex: 1; font: 12px/16px Roboto, "Noto Sans", sans-serif; }
.win-controls { display: flex; gap: 34px; align-items: flex-start; }

/* Document tabs */
.tabbar {
  display: flex;
  height: 32px;
  background: #cbcbcb;
  align-items: stretch;
}
.tabbar > * { margin-top: 4px; }
.quick { display: flex; width: 193px; padding-left: 9px; color: #666; margin-top: 0; }
.quick button { gap: 6px; }
.q-file { margin-left: 19px; }
.q-save { margin-left: 20px; }
.q-undo { margin-left: 19px; }
.q-redo { margin-left: 12px; color: #999; }
.home-tab { width: 39px; padding-top: 2px; background: #b9b9b9; border-radius: 4px 4px 0 0; }
.doc-tab {
  flex: 1;
  display: flex;
  align-items: center;
  margin-left: 4px;
  padding: 1px 6px 0 4px;
  background: #f1f1f1;
  border-radius: 4px 4px 0 0;
  font-size: 12px;
}
.doc-name { flex: 1; display: flex; justify-content: center; gap: 6px; }
.new-tab { width: 28px; margin-left: 4px; background: #b9b9b9; border-radius: 4px 4px 0 0; }
.status { display: flex; align-items: center; gap: 17px; padding: 0 9px 0 12px; margin-top: 0; }
.avatar { margin-left: 1px; }

/* Ribbon */
.ribbon {
  display: flex;
  gap: 16px;
  height: 85px;
  padding: 0 12px 3px;
  background: #f1f1f1;
  box-shadow: inset 0 -3px #f4f4f4, inset 0 -4px #dadada;
  font-family: Roboto, "Liberation Sans", sans-serif;
}
.workspace {
  width: 110px;
  height: 62px;
  margin-top: 10px;
  gap: 6px;
  border: 2px solid #dcdcdc;
  border-radius: 5px;
  font-weight: 700;
}
.tabs { display: flex; gap: 18px; }
.tabs a { height: 24px; padding: 4px 13px 0; line-height: 15px; border-bottom: 3px solid transparent; }
.tabs .active { color: #0696d7; font-weight: 700; border-color: #0696d7; }
.groups { display: flex; }
.group {
  display: flex;
  flex-direction: column;
  align-items: center;
  gap: 2px;
  height: 56px;
  padding: 0 10px 0 12px;
  background: linear-gradient(#d4d4d4, #d4d4d4) right center / 1px 52px no-repeat;
}
.group.first { padding-left: 0; }
.first .caption { margin-right: 8px; }
.group.wide { padding: 0 13px 0 12px; }
.group.last { background: none; }
.tools { display: flex; gap: 11px; height: 38px; align-items: center; }
.tools button { width: 32px; height: 32px; }
.tools .selected { width: 38px; height: 38px; background: #0696d7; }
.caption { gap: 4px; height: 16px; line-height: 16px; }

/* Modelling viewport */
.viewport {
  position: relative;
  flex: 1;
  display: grid;
  grid-template: 1fr auto / 1fr auto 1fr;
  padding: 4px 0 4px 4px;
}
.model { position: absolute; inset: 0; width: 100%; height: 100%; }
.viewport > :not(.model) { position: relative; }

.browser { width: 300px; }
.panel-head {
  display: flex;
  align-items: center;
  height: 25px;
  padding: 0 10px 0 4px;
  background: #f1f1f1;
  border: 1px solid #c4c4c4;
}
.panel-head h2 {
  flex: 1;
  padding-left: 9px;
  color: #666;
  font: 11px/16px Roboto, "Liberation Sans", sans-serif;
}
.tree { list-style: none; padding-top: 5px; display: grid; gap: 4px; }
.tree li { display: flex; align-items: center; height: 20px; padding-left: 36px; }
.tree .root { padding-left: 16px; }
.tree .leaf { padding-left: 54px; }
.twist { margin-right: 8px; }
.node {
  display: flex;
  align-items: center;
  gap: 14px;
  height: 20px;
  padding: 0 9px 0 3px;
  background: #f1f1f1;
}
.node.gear { gap: 11px; }
.pair svg + svg { margin-left: -5px; }
.root .node { gap: 0; padding-right: 8px; }
.comp { margin-left: 6px; width: 25px; height: 16px; padding-left: 3px; background: #999; }
.root-name { height: 16px; padding: 0 6px 0 8px; background: #7f7f7f; color: #fff; font-size: 12px; font-weight: 700; }
.act { margin-left: 4px; }
.act input {
  display: block;
  appearance: none;
  width: 13px;
  height: 13px;
  margin: 0;
  border: 1px solid #333;
  border-radius: 50%;
  background: radial-gradient(circle, #222 2px, #fff 3px);
}

.readonly {
  display: flex;
  align-items: center;
  height: 24px;
  padding: 0 10px 0 5px;
  background: #f1f1f1;
}
.readonly strong { padding-left: 8px; }
.readonly .msg { padding: 0 8px 0 21px; }
.readonly a { padding-left: 11px; border-left: 1px solid #d4d4d4; line-height: 24px; color: #0277bd; }

.viewcube { justify-self: end; margin-top: 11px; }
.face { font: 700 8px Roboto, sans-serif; fill: #969ba2; }
.axis-z { font: 15px Roboto, sans-serif; fill: #8c8cff; }
.axis-x { font: 15px Roboto, sans-serif; fill: #ff8c8c; }

.comments { width: 300px; border-top: 0; padding-left: 15px; }
.navbar {
  display: flex;
  align-items: center;
  justify-self: center;
  align-self: start;
  gap: 10px;
  height: 24px;
  padding: 0 4px 0 3px;
  background: #f1f1f1;
}
.navbar button { gap: 4px; }
.navbar button:first-child, .navbar .fit { margin-right: -4px; }
.navbar .tight { gap: 2px; margin-right: -3px; }
.navbar .tight:last-child { margin-right: 0; }

/* Taskbar */
.taskbar {
  display: flex;
  height: 40px;
  background: linear-gradient(90deg, #3b2e25 0%, #3b2f26 50%, #33261e 75%, #2f1d18 90%, #311f19 100%);
  color: #fff;
  font: 12px/18px "Open Sans", "Noto Sans", sans-serif;
}
.start { width: 48px; }
.search {
  display: flex;
  align-items: center;
  width: 288px;
  padding-left: 11px;
  background: #f1f1f1;
  border: 1px solid #b4b4b4;
}
.search input {
  flex: 1;
  min-width: 0;
  padding: 0 0 0 12px;
  border: 0;
  background: none;
  color: #222;
  font: 14px/20px "Open Sans", "Noto Sans", sans-serif;
}
.search input::placeholder { color: #333; opacity: 1; }
.apps { display: flex; gap: 1px; }
.apps button { width: 48px; }
.apps .taskview { margin-right: 2px; }
.apps .open { background: linear-gradient(#76b9ed, #76b9ed) center bottom / 40px 2px no-repeat; }
.fus { font: 700 6px "Open Sans", sans-serif; fill: #fff; }
.tray { display: flex; margin-left: auto; gap: 8px; padding-right: 5px; }
.news { gap: 14px; margin-right: 19px; font-size: 13px; }
.camera { margin-left: 4px; }
.lang { margin: 0 4px 0 2px; }
.clock { flex-direction: column; font-size: 11px; }
.notif { margin-left: 10px; padding: 6px 9px 0 0; border-right: 1px solid #77706c; }
.notif text { font: 11px "Open Sans", sans-serif; fill: #fff; }
```
